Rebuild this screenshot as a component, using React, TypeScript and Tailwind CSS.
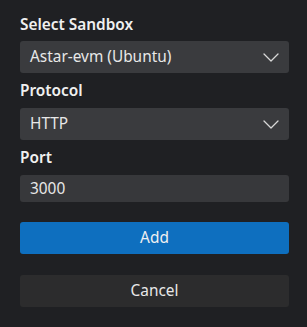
import React, { useState } from 'react';

const font = { fontFamily: '"Noto Sans", "Open Sans", sans-serif' };

function Chevron() {
  return (
    <svg width="16" height="9" viewBox="0 0 16 9" fill="none" className="shrink-0">
      <path d="M1 1l7 7 7-7" stroke="#d8d8d8" strokeWidth="1.3" strokeLinecap="round" strokeLinejoin="round" />
    </svg>
  );
}

function SelectBox({ value }: { value: string }) {
  return (
    <div className="flex h-8 w-full items-center justify-between rounded-[3px] bg-[#3a3b3e] pl-[10px] pr-[10px] text-[15.4px] text-[#e8e8e8]">
      <span>{value}</span>
      <Chevron />
    </div>
  );
}

export default function App() {
  const [port, setPort] = useState('3000');

  return (
    <div className="min-h-[327px] w-full bg-[#1f2023] pl-5 pr-[18px] pt-[13px]" style={font}>
      <div className="flex flex-col">
        {/* Sandbox */}
        <label className="mb-[4px] text-[15.4px] leading-6 font-semibold text-[#f0f0f0]">Select Sandbox</label>
        <SelectBox value="Astar-evm (Ubuntu)" />

        {/* Protocol */}
        <label className="mt-[6px] mb-[5px] text-[15.4px] leading-6 font-semibold text-[#f0f0f0]">Protocol</label>
        <SelectBox value="HTTP" />

        {/* Port */}
        <label className="mt-[6px] mb-[5px] text-[15.4px] leading-6 font-semibold text-[#f0f0f0]">Port</label>
        <input
          value={port}
          onChange={(e) => setPort(e.target.value)}
          className="h-[27px] w-full rounded-[3px] bg-[#37383b] px-[10px] text-[15.4px] text-[#e8e8e8] outline-none"
        />

        <button className="mt-5 h-8 w-full rounded-[3px] bg-[#0e6fbf] text-[15.4px] text-[#f0f0f0]">Add</button>
        <button className="mt-[21px] h-8 w-full rounded-[3px] bg-[#2c2c2d] text-[15.4px] text-[#e8e8e8]">Cancel</button>
      </div>
    </div>
  );
}
